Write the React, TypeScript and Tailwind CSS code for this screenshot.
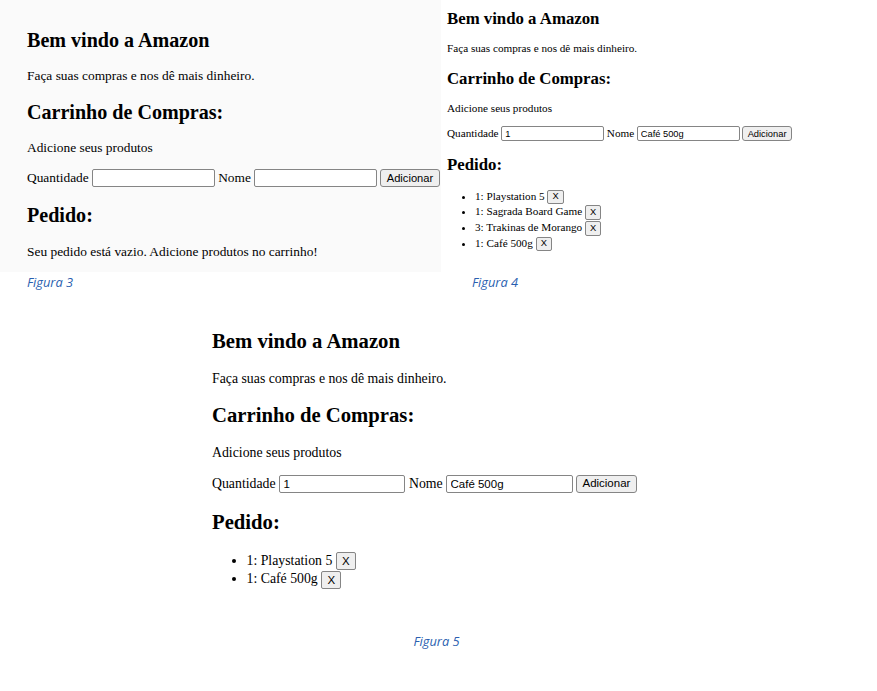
import React from 'react';

interface PageProps {
  className: string;
  qty: string;
  name: string;
  items: string[];
}

// one copy of the little "Amazon" page, sized in em so each figure scales from its font size
function AmazonPage({ className, qty, name, items }: PageProps) {
  return (
    <div className={`flow-root font-['Liberation_Serif',serif] leading-[1.15] text-black ${className}`}>
      <h2 className="text-[1.5em] font-bold leading-[1.15] my-[0.83em]">Bem vindo a Amazon</h2>
      <p className="my-[1em]">Faça suas compras e nos dê mais dinheiro.</p>
      <h2 className="text-[1.5em] font-bold leading-[1.15] my-[0.83em]">Carrinho de Compras:</h2>
      <p className="my-[1em]">Adicione seus produtos</p>
      <div className="flex items-center gap-[0.25em] h-[1.35em] whitespace-nowrap">
        <span>Quantidade</span>
        <input
          readOnly
          value={qty}
          className="h-[1.62em] w-[11em] shrink-0 border border-[#858585] rounded-[2px] bg-white px-[0.3em] font-['Liberation_Sans',Arial,sans-serif] text-[0.833em] text-black outline-none"
        />
        <span>Nome</span>
        <input
          readOnly
          value={name}
          className="h-[1.62em] w-[11em] shrink-0 border border-[#858585] rounded-[2px] bg-white px-[0.3em] font-['Liberation_Sans',Arial,sans-serif] text-[0.833em] text-black outline-none"
        />
        <button className="h-[1.62em] w-[5.3em] shrink-0 border border-[#858585] rounded-[3px] bg-[#efefef] font-['Liberation_Sans',Arial,sans-serif] text-[0.833em] text-black">
          Adicionar
        </button>
      </div>
      <h2 className="text-[1.5em] font-bold leading-[1.15] my-[0.83em]">Pedido:</h2>
      {items.length === 0 ? (
        <p className="my-[1em]">Seu pedido está vazio. Adicione produtos no carrinho!</p>
      ) : (
        <ul className="list-disc pl-[2.5em] my-[1em]">
          {items.map((item) => (
            <li key={item} className="leading-[1.37em]">
              {item}{' '}
              <button className="inline-block align-middle h-[1.55em] w-[1.75em] border border-[#858585] rounded-[2px] bg-[#efefef] font-['Liberation_Sans',Arial,sans-serif] text-[0.833em] leading-none text-black">
                X
              </button>
            </li>
          ))}
        </ul>
      )}
    </div>
  );
}

function Caption({ children, className = '' }: { children: React.ReactNode; className?: string }) {
  return (
    <div className={`font-['Open_Sans',sans-serif] italic text-[12.8px] leading-[16px] text-[#2a5fb0] ${className}`}>
      {children}
    </div>
  );
}

export default function App() {
  return (
    <div className="w-[877px] h-[691px] bg-white overflow-hidden">
      <div className="flex h-[272px]">
        <div className="w-[441px] shrink-0 overflow-hidden bg-[#fafafa] pl-[27px] pt-[12px]">
          <AmazonPage className="text-[13.4px]" qty="" name="" items={[]} />
        </div>
        <div className="flex-1 overflow-hidden bg-white pl-[6px]">
          <AmazonPage
            className="text-[11.2px] -mt-[5px]"
            qty="1"
            name="Café 500g"
            items={['1: Playstation 5', '1: Sagrada Board Game', '3: Trakinas de Morango', '1: Café 500g']}
          />
        </div>
      </div>
      <div className="flex mt-[2px]">
        <Caption className="w-[472px] pl-[27px]">Figura 3</Caption>
        <Caption>Figura 4</Caption>
      </div>
      <div className="pl-[212px] mt-[23px]">
        <AmazonPage className="text-[13.8px]" qty="1" name="Café 500g" items={['1: Playstation 5', '1: Café 500g']} />
      </div>
      <Caption className="mt-[30px] text-center pr-[4px]">Figura 5</Caption>
    </div>
  );
}
